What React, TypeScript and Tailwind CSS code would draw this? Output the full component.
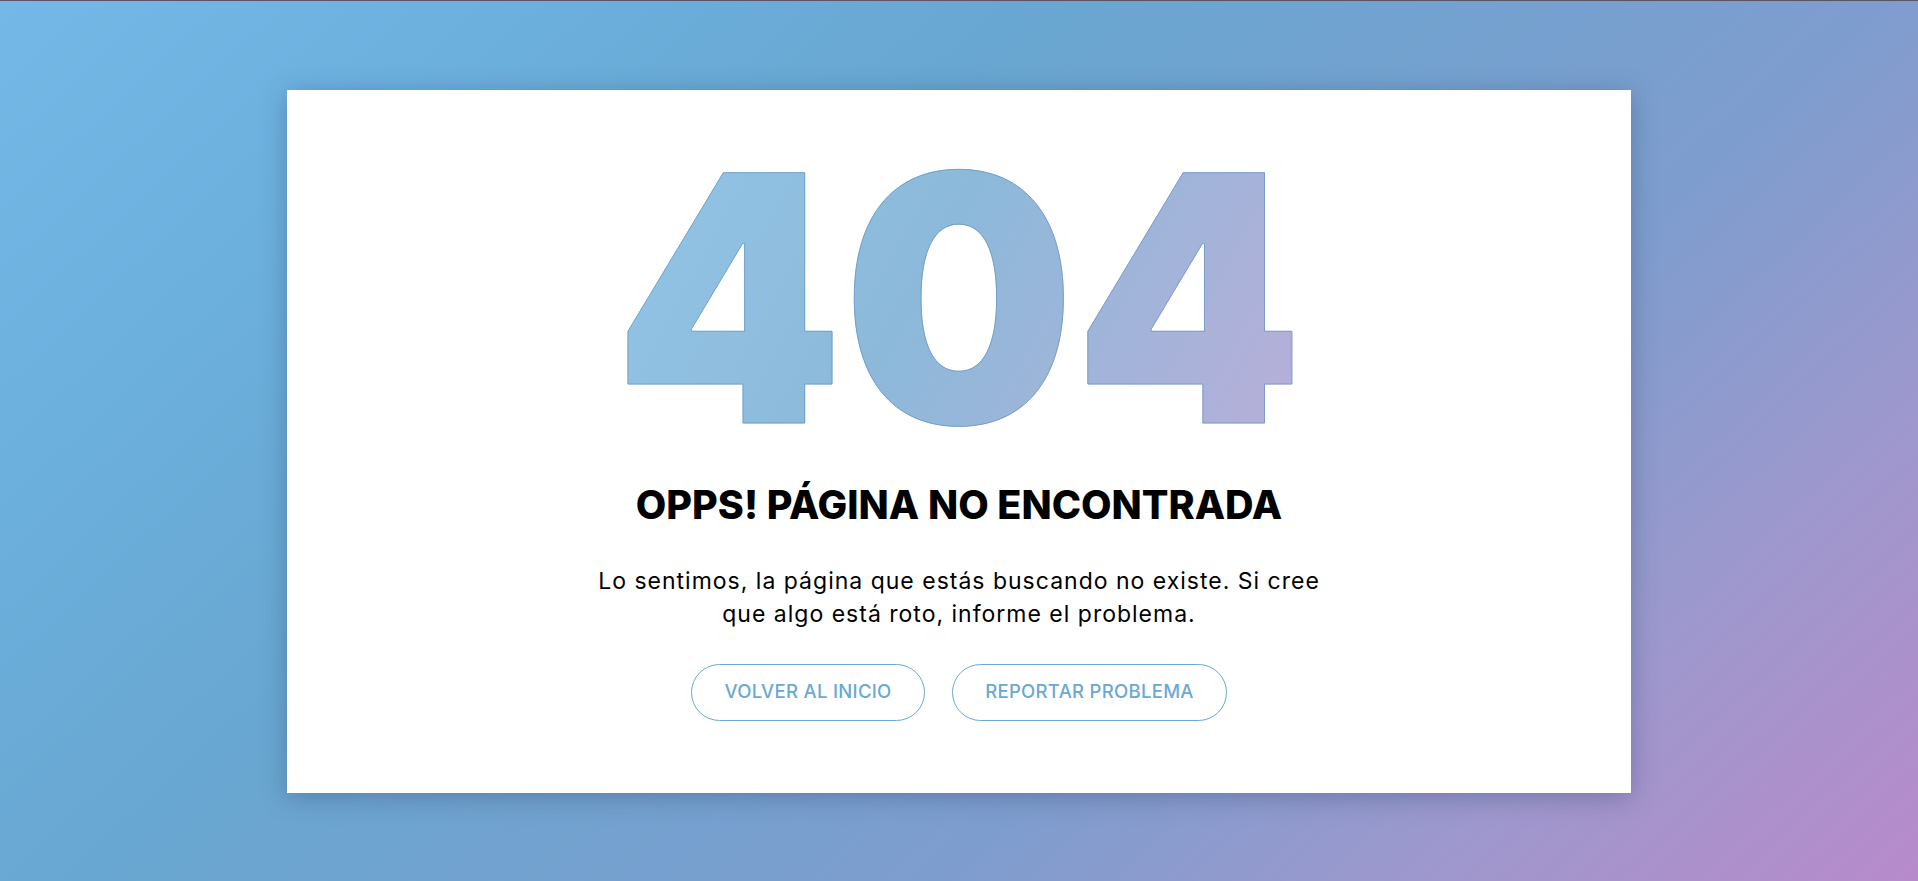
export default function App() {
  return (
    <div className="h-[881px] w-full border-t border-[#5b5566] bg-[linear-gradient(137deg,#74b8e7_0%,#6cb0de_18%,#68a7d1_36%,#7e9dce_66%,#9d98cd_82%,#b88acc_100%)] flex items-center justify-center font-['Inter',sans-serif]">
      <div className="w-[1344px] h-[703px] bg-white shadow-[0_4px_24px_rgba(40,60,100,0.35)] flex flex-col items-center pt-[68px]">
        <h1 className="text-[344px] leading-[280px] h-[280px] font-black scale-x-[0.946] bg-[linear-gradient(120deg,#93c5e6_0%,#8cb9da_45%,#b9aed9_100%)] bg-clip-text text-transparent [-webkit-text-stroke:1px_rgba(90,140,190,0.6)]">
          404
        </h1>
        <h2 className="mt-[43px] text-[39.5px] leading-[48px] font-extrabold text-black">
          OPPS! PÁGINA NO ENCONTRADA
        </h2>
        <p className="mt-[36px] text-center text-[23px] leading-[33px] tracking-[1px] text-black">
          Lo sentimos, la página que estás buscando no existe. Si cree
          <br />
          que algo está roto, informe el problema.
        </p>
        <div className="mt-[33px] flex gap-[27px]">
          <button className="h-[57px] w-[234px] rounded-full border-[1.5px] border-[#6aa9d3] text-[#6aa9d3] text-[18.5px] font-medium uppercase tracking-[0.3px]">
            Volver al inicio
          </button>
          <button className="h-[57px] w-[275px] rounded-full border-[1.5px] border-[#6aa9d3] text-[#6aa9d3] text-[18.5px] font-medium uppercase tracking-[0.3px]">
            Reportar problema
          </button>
        </div>
      </div>
    </div>
  );
}
